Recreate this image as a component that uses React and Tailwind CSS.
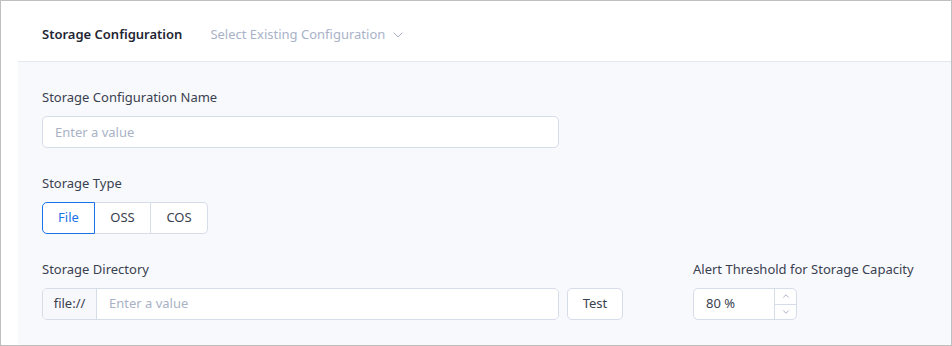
import { ChevronDown, ChevronUp } from 'lucide-react'

export default function App() {
    return (
        <div className="w-[952px] h-[346px] border border-[#bfbfbf] bg-white flex overflow-hidden" style={{ fontFamily: '"Noto Sans", "Open Sans", sans-serif' }}>
            <div className="w-[17px] shrink-0 bg-white" />
            <div className="flex-1 flex flex-col">
                {/* Header */}
                <div className="h-[61px] shrink-0 bg-white border-b border-[#e3e7ef] flex items-center pl-6 pt-2">
                    <span className="text-[13px] font-semibold text-[#1f2533]">Storage Configuration</span>
                    <button className="ml-[28px] flex items-center text-[13px] text-[#a9b2c8]">
                        Select Existing Configuration
                        <ChevronDown className="w-4 h-4 ml-[5px] stroke-[1.5]" />
                    </button>
                </div>

                {/* Form body */}
                <div className="flex-1 bg-[#f8f9fd] pl-6 pt-[26px]">
                    <label className="block text-[13px] text-[#3a4150] leading-[18px]">Storage Configuration Name</label>
                    <input
                        type="text"
                        placeholder="Enter a value"
                        className="mt-[10px] block w-[517px] h-[32px] px-3 bg-white border border-[#d6dce8] rounded-[5px] text-[13px] placeholder-[#a9b2c5] outline-none"
                    />

                    <label className="block mt-[26px] text-[13px] text-[#3a4150] leading-[18px]">Storage Type</label>
                    <div className="mt-[10px] flex w-fit h-[32px] text-[13px]">
                        <button className="w-[53px] bg-white border border-[#1a73e8] text-[#1a73e8] rounded-l-[5px]">File</button>
                        <button className="w-[56px] bg-white border-y border-r border-[#d6dce8] text-[#3a4150]">OSS</button>
                        <button className="w-[57px] bg-white border-y border-r border-[#d6dce8] text-[#3a4150] rounded-r-[5px]">COS</button>
                    </div>

                    <div className="mt-[26px] flex">
                        <div>
                            <label className="block text-[13px] text-[#3a4150] leading-[18px]">Storage Directory</label>
                            <div className="mt-[10px] flex items-center">
                                <div className="flex w-[517px] h-[32px] border border-[#d6dce8] rounded-[5px] overflow-hidden text-[13px]">
                                    <span className="w-[54px] shrink-0 flex items-center justify-center bg-[#f7f8fb] border-r border-[#d6dce8] text-[#3a4150]">file://</span>
                                    <input type="text" placeholder="Enter a value" className="flex-1 px-3 bg-white placeholder-[#a9b2c5] outline-none" />
                                </div>
                                <button className="ml-[8px] w-[56px] h-[32px] bg-white border border-[#d6dce8] rounded-[5px] text-[13px] text-[#3a4150]">Test</button>
                            </div>
                        </div>
                        <div className="ml-[70px]">
                            <label className="block text-[13px] text-[#3a4150] leading-[18px]">Alert Threshold for Storage Capacity</label>
                            <div className="mt-[10px] flex w-[104px] h-[32px] bg-white border border-[#d6dce8] rounded-[5px] overflow-hidden text-[13px]">
                                <span className="flex-1 flex items-center pl-3 text-[#3a4150]">80 %</span>
                                <div className="w-[22px] flex flex-col border-l border-[#d6dce8] text-[#9aa4b8]">
                                    <span className="flex-1 flex items-center justify-center border-b border-[#d6dce8]"><ChevronUp className="w-2.5 h-2.5" /></span>
                                    <span className="flex-1 flex items-center justify-center"><ChevronDown className="w-2.5 h-2.5" /></span>
                                </div>
                            </div>
                        </div>
                    </div>
                </div>
            </div>
        </div>
    )
}
